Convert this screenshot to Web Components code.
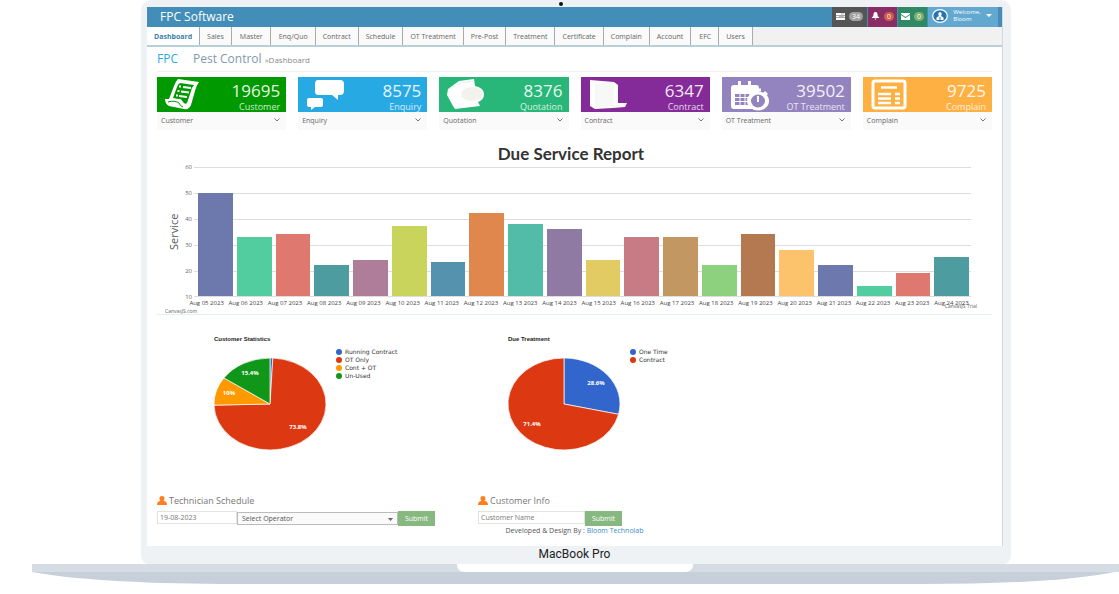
<!DOCTYPE html>
<html lang="en">
<head>
<meta charset="utf-8">
<title>FPC Software - Dashboard</title>
<style>
body { margin: 0; background: #fff; font-family: "Open Sans", "Noto Sans", sans-serif; color: #666; }
</style>
</head>
<body>
<laptop-frame>
  <app-header></app-header>
  <nav-tabs></nav-tabs>
  <page-heading></page-heading>
  <stat-grid>
    <stat-card color="#009900" value="19695" label="Customer" icon="list"></stat-card>
    <stat-card color="#27a9e3" value="8575" label="Enquiry" icon="chat"></stat-card>
    <stat-card color="#28b779" value="8376" label="Quotation" icon="paper"></stat-card>
    <stat-card color="#852b99" value="6347" label="Contract" icon="folder"></stat-card>
    <stat-card color="#9383bf" value="39502" label="OT Treatment" icon="calendar"></stat-card>
    <stat-card color="#ffb043" value="9725" label="Complain" icon="news"></stat-card>
  </stat-grid>
  <bar-chart></bar-chart>
  <chart-row>
    <pie-chart heading="Customer Statistics" slices='[["Running Contract",0.8,"#3366cc"],["OT Only",73.8,"#dc3912",85,72],["Cont + OT",10,"#ff9900",16,38],["Un-Used",15.4,"#109618",37,18]]'></pie-chart>
    <pie-chart heading="Due Treatment" slices='[["One Time",28.6,"#3366cc",89,28],["Contract",71.4,"#dc3912",25,69]]'></pie-chart>
  </chart-row>
  <lookup-forms></lookup-forms>
  <page-footer></page-footer>
</laptop-frame>

<script>
const define = (name, render) => customElements.define(name, class extends HTMLElement {
  constructor() { super(); this.attachShadow({ mode: 'open' }); }
  connectedCallback() { this.shadowRoot.innerHTML = render(this); }
});

define('laptop-frame', () => `
<style>
:host { display: block; }
.lid { position: relative; margin: 0 108px 0 141px; padding: 7px 9px 0 6px; background: #eff2f5; border-radius: 10px 10px 8px 8px; }
.lid::before { content: ""; position: absolute; top: 2px; left: calc(50% - 17px); width: 4px; height: 4px; border-radius: 2px; background: #111; }
.screen { background: #fff; border-right: 1px solid #d5d9dd; margin-right: -1px; }
.brand { height: 18px; line-height: 16px; text-align: center; font-family: Roboto, sans-serif; font-size: 12px; color: #222; }
.base { position: relative; margin-left: 32px; height: 20px; }
.base svg { display: block; width: 100%; height: 20px; }
.notch { position: absolute; top: 0; left: calc(50% - 119px); width: 236px; height: 8px; background: #fff; border-radius: 0 0 7px 7px; }
</style>
<div class="lid"><div class="screen"><slot></slot></div><div class="brand">MacBook Pro</div></div>
<div class="base">
  <svg viewBox="0 0 1087 20" preserveAspectRatio="none" aria-hidden="true">
    <path d="M0 7H1087Q1030 20 890 20H190Q60 19 0 8Z" fill="#c6cfda"/>
    <path d="M0 0H1087V8H0Z" fill="#d5dce4"/>
  </svg>
  <div class="notch"></div>
</div>`);

define('app-header', () => `
<style>
:host { display: flex; height: 20px; background: #438eb9; color: #fff; padding-right: 4px; }
h1 { flex: 1; margin: 0 0 0 13px; font-size: 12px; font-weight: 400; line-height: 19px; }
button { display: flex; align-items: center; justify-content: center; gap: 4px; border: 0; margin: 0 0 0 1px; padding: 0 0 2px; width: 29px; color: #fff; font-family: inherit; font-size: 6px; line-height: 7px; }
.tasks { width: 35px; background: #555; }
.bell { background: #892e65; }
.mail { background: #2e8965; }
.user { width: 70px; background: #62a8d1; text-align: left; gap: 5px; padding-right: 2px; }
.badge { border-radius: 5px; padding: 1px 3px; background: #a0a0a0; font-size: 7px; }
.bell .badge { background: #d15b47; }
.mail .badge { background: #82af6f; }
</style>
<h1>FPC Software</h1>
<button class="tasks"><svg width="9" height="7"><path d="M0 0h9v2H0zM0 2.600h9v1.800H0zM0 5h9v2H0z" fill="#fff"/><path d="M5 1h3M3 3.500h5" stroke="#999" stroke-width=".7"/></svg><span class="badge">34</span></button>
<button class="bell"><svg width="9" height="8"><path d="M4.500 0C2.500 0 2.500 2 2.300 4L.5 6h8l-1.800-2C6.500 2 6.500 0 4.500 0zM3.500 6.500h2L4.500 8z" fill="#fff"/></svg><span class="badge">0</span></button>
<button class="mail"><svg width="9" height="7"><path d="M0 0h9v1L4.500 4 0 1zM0 2l4.500 3L9 2v5H0z" fill="#fff"/></svg><span class="badge">0</span></button>
<button class="user"><svg width="16" height="14" viewBox="0 0 16 14"><ellipse cx="8" cy="7" rx="7.300" ry="6.300" fill="#2573b0" stroke="#fff" stroke-width="1.300"/><path d="M8 3c2 0 2 3 1 4l2.500 1.500V11h-7V8.500L7 7C6 6 6 3 8 3z" fill="#fff"/><path d="M8 8v3" stroke="#2573b0"/></svg><span>Welcome,<br>Bloom</span><svg width="6" height="4"><path d="M0 0h6L3 3z" fill="#fff"/></svg></button>`);

define('nav-tabs', () => `
<style>
:host { display: block; background: #f1f1f1; border-bottom: 2px solid #b5cfdb; }
nav { display: flex; height: 18px; }
a { padding: 0 7px; border-right: 1px solid #aaa; background: #fafafa; color: #666; text-decoration: none; font-size: 7px; line-height: 19px; white-space: nowrap; }
a.on { background: #fff; color: #3a80ac; font-weight: 700; }
a:nth-child(3), a:nth-child(4), a:nth-child(13) { padding-left: 8px; }
</style>
<nav>${['Dashboard','Sales','Master','Enq/Quo','Contract','Schedule','OT Treatment','Pre-Post','Treatment','Certificate','Complain','Account','EFC','Users']
  .map((t, i) => `<a href="#"${i ? '' : ' class="on"'}>${t}</a>`).join('')}</nav>`);

define('page-heading', () => `
<style>
:host { display: flex; align-items: baseline; margin: 0 10px; height: 24px; border-bottom: 1px solid #f1f1f1; line-height: 23px; font-size: 12px; color: #8199b0; }
b { font-weight: 400; color: #27a9e3; margin-right: 15px; }
h2 { margin: 0 3px 0 0; font-size: 12px; font-weight: 400; }
small { font-size: 8px; color: #888; }
</style>
<b>FPC</b><h2>Pest Control</h2><small>»Dashboard</small>`);

define('stat-grid', () => `
<style>:host { display: grid; grid-template-columns: repeat(6, 1fr); gap: 12px; margin: 5px 10px 0; }</style><slot></slot>`);

const ICONS = {
  list: '<path d="M13 2L34 5Q31 9 30 14L26 28Q24 33 19 32L4 29Q0 27 0 22H4L9 9Q11 4 13 2Z" fill="#fff"/><path d="M15 6L29 8Q27 10 26 14L22 26Q20 28 18 25Q16 21 13 22L8 21L12 10Q13 7 15 6Z" fill="BG"/><path d="M18 10L26 11M16 14.500L24 15.500M14 19L22 20" stroke="#fff" stroke-width="2"/><path d="M14 9.500h2M12.500 14h2M11 18.500h2" stroke="#fff" stroke-width="2"/><path d="M3 25Q10 23 14 26Q15 29 18 30" stroke="BG" fill="none"/>',
  chat: '<path d="M12 3H34Q38 3 38 7V14Q38 18 34 18H32V23L26 18H12Q9 18 9 14V7Q9 3 12 3ZM3 21H15Q17 21 17 23V28Q17 30 15 30H9L5 33V30H3Q1 30 1 28V23Q1 21 3 21Z" fill="#fff"/>',
  paper: '<path d="M1 12L12 4L27 2L28 9Q37 11 37 17Q37 23 31 25L33 29L8 32L6 29L0 18Z" fill="#fff"/><ellipse cx="25" cy="17" rx="11" ry="7" fill="#f3f3ee"/><path d="M2 12L14 6L27 4" stroke="#dff5eb" fill="none"/>',
  folder: '<path d="M1 3L25 5L29 8V26H38L36 30L24 31L6 32L1 29Z" fill="#fff"/><path d="M7 7L25 5V29L7 31Z" fill="#f8f8f6"/><path d="M1 3L7 7V31M22 30L37 27" stroke="#eee" stroke-width=".7" fill="none"/>',
  calendar: '<path d="M4 8H8V4H11V8H18V4H21V8H26Q29 8 29 11V29Q29 32 26 32H4Q1 32 1 29V11Q1 8 4 8Z" fill="#fff"/><path d="M5 17H25V28H5Z" fill="BG"/><path d="M5 20.500H25M5 24.500H25M10 17V28M15 17V28M20 17V28" stroke="#fff"/><path d="M24 13H31M27.500 13V17M34 15L37 18" stroke="#fff" stroke-width="3"/><ellipse cx="28" cy="24" rx="11" ry="9.500" fill="#fff"/><ellipse cx="28" cy="24" rx="7" ry="6.500" fill="BG"/><path d="M28 19V25" stroke="#fff" stroke-width="2"/>',
  news: '<rect x="2" y="4" width="32" height="27" rx="2" fill="none" stroke="#fff" stroke-width="3"/><path d="M10 10.500H26" stroke="#fff" stroke-width="2.500"/><path d="M7 17H20M7 21.500H20M7 26H20M24 17H29M24 21.500H29M24 26H29" stroke="#fff" stroke-width="2.500"/>'
};

define('stat-card', el => `
<style>
:host { display: block; min-width: 0; background: #fafafa; }
.top { display: flex; justify-content: space-between; height: 35px; padding: 0 6px 0 8px; background: ${el.getAttribute('color')}; color: #fff; text-align: right; }
.top svg { width: 40px; height: 35px; }
.num { font-size: 17px; line-height: 18px; padding-top: 5px; opacity: .9; }
.label { font-size: 9px; line-height: 13px; opacity: .8; white-space: nowrap; }
a { display: flex; justify-content: space-between; align-items: center; height: 18px; box-sizing: border-box; padding: 0 6px 2px 4px; font-size: 7px; color: #666; text-decoration: none; }
</style>
<div class="top"><svg viewBox="0 0 40 35" aria-hidden="true">${ICONS[el.getAttribute('icon')].replaceAll('BG', el.getAttribute('color'))}</svg>
<div><div class="num">${el.getAttribute('value')}</div><div class="label">${el.getAttribute('label')}</div></div></div>
<a href="#">${el.getAttribute('label')}<svg width="6" height="4"><path d="M.5.5L3 3L5.500.5" fill="none" stroke="#777"/></svg></a>`);

const BARS = [[50,'#6d78ad'],[33,'#51cda0'],[34,'#df7970'],[22,'#4c9ca0'],[24,'#ae7d99'],[37,'#c9d45c'],[23,'#5592ad'],[42,'#df874d'],[38,'#52bca8'],[36,'#8e7aa3'],[24,'#e3cb64'],[33,'#c77b85'],[33,'#c39762'],[22,'#8dd17e'],[34,'#b57952'],[28,'#fcc26c'],[22,'#6d78ad'],[14,'#51cda0'],[19,'#df7970'],[25,'#4c9ca0']];

define('bar-chart', () => `
<style>
:host { display: block; position: relative; margin: 0 10px; padding-top: 14px; border-bottom: 1px solid #e6eef2; }
h3 { margin: 0; font: 700 17px/19px Lato, sans-serif; color: #333; text-align: center; padding-right: 7px; height: 23px; }
.area { display: grid; grid-template-columns: 24px 9px 1fr; column-gap: 2px; padding-right: 21px; height: 130px; }
.axis { writing-mode: vertical-rl; transform: rotate(180deg); text-align: center; font-size: 11px; line-height: 14px; color: #555; justify-self: end; }
.ticks { display: flex; flex-direction: column; justify-content: space-between; margin: -4px 0; font-size: 6px; line-height: 8px; text-align: right; }
.plot { display: flex; align-items: flex-end; gap: 4px; padding: 0 2px 0 4px; background: repeating-linear-gradient(#ddd 0 1px, transparent 1px 26px); border-bottom: 1px solid #ddd; }
.plot i { flex: 1; }
.dates { display: flex; padding: 2px 21px 0 30px; font-size: 6px; line-height: 9px; color: #444; }
.dates span { flex: 1 1 0; width: 0; display: flex; justify-content: center; white-space: nowrap; }
.credit { font-size: 5px; line-height: 6px; padding-left: 8px; }
.trial { position: absolute; right: 15px; bottom: 5px; font-size: 5px; line-height: 6px; }
</style>
<h3>Due Service Report</h3>
<div class="area"><div class="axis">Service</div>
<div class="ticks">${[60,50,40,30,20,10].map(n => `<span>${n}</span>`).join('')}</div>
<div class="plot">${BARS.map(([v, c]) => `<i style="height:${(v - 10) * 2}%;background:${c}"></i>`).join('')}</div></div>
<div class="dates">${BARS.map((b, i) => `<span>Aug ${String(i + 5).padStart(2, '0')} 2023</span>`).join('')}</div>
<div class="credit">CanvasJS.com</div><div class="trial">CanvasJS Trial</div>`);

define('chart-row', () => `
<style>:host { display: grid; grid-template-columns: 294px 1fr; padding: 17px 0 0 66px; }</style><slot></slot>`);

define('pie-chart', el => {
  const slices = JSON.parse(el.getAttribute('slices'));
  let turn = 0;
  const point = t => `${57 + 56 * Math.sin(t * Math.PI / 50)} ${47 - 46 * Math.cos(t * Math.PI / 50)}`;
  const paths = slices.map(([, size, color]) => {
    const from = point(turn);
    turn += size;
    return `<path d="M57 47L${from}A56 46 0 ${size > 50 ? 1 : 0} 1 ${point(turn)}Z" fill="${color}" stroke="#fff" stroke-width=".7"/>`;
  }).join('');
  const texts = slices.filter(s => s[3]).map(s => `<text x="${s[3]}" y="${s[4]}">${s[1]}%</text>`).join('');
  return `
<style>
:host { display: block; }
h4 { margin: 0; font: 700 6px/14px "Liberation Sans", sans-serif; color: #222; height: 25px; padding-left: 1px; }
.body { display: flex; gap: 9px; }
svg { display: block; flex: none; }
text { font: 700 6px "Open Sans", sans-serif; fill: #fff; text-anchor: middle; }
ul { list-style: none; margin: -9px 0 0; padding: 0; font: 6px/8px "DejaVu Sans", sans-serif; color: #333; }
li { display: flex; align-items: center; gap: 3px; height: 8px; white-space: nowrap; }
li i { width: 6px; height: 6px; border-radius: 3px; }
</style>
<h4>${el.getAttribute('heading')}</h4>
<div class="body"><svg width="114" height="94">${paths}${texts}</svg>
<ul>${slices.map(s => `<li><i style="background:${s[2]}"></i>${s[0]}</li>`).join('')}</ul></div>`;
});

const PERSON = '<svg width="10" height="9" viewBox="0 0 10 9" aria-hidden="true"><path d="M5 0C8 0 8 3 6.500 5Q10 5 10 9H0Q0 5 3.500 5C2 3 2 0 5 0Z" fill="#ff7f1f"/></svg>';
define('lookup-forms', () => `
<style>
:host { display: grid; grid-template-columns: 321px 1fr; padding: 43px 0 0 10px; }
label { display: flex; align-items: flex-start; gap: 2px; font-size: 9px; line-height: 14px; height: 17px; color: #777; }
label svg { margin-top: 2px; }
form { display: flex; height: 15px; align-items: flex-start; }
input, select, button { box-sizing: border-box; margin: 0; border-radius: 0; font: 7px/9px "Open Sans", sans-serif; }
input { width: 80px; height: 13px; border: 1px solid #e2e2e2; padding: 0 2px 1px; color: #777; background: #fff; }
input::placeholder { color: #777; }
.wide { width: 107px; }
.pick { display: flex; position: relative; }
.pick svg { position: absolute; right: 5px; top: 7px; }
select { appearance: none; width: 161px; height: 13px; margin-top: 1px; border: 1px solid #bbb; background: #fafafa; color: #555; padding: 0 4px; }
button { width: 37px; height: 15px; border: 0; background: #87b87f; color: #fff; }
</style>
<section><label for="day">${PERSON}Technician Schedule</label>
<form><input id="day" value="19-08-2023"><span class="pick"><select aria-label="Operator"><option>Select Operator</option></select><svg width="5" height="3"><path d="M0 0h5L2.500 3z" fill="#666"/></svg></span><button type="button">Submit</button></form></section>
<section><label for="who">${PERSON}Customer Info</label>
<form><input id="who" class="wide" placeholder="Customer Name"><button type="button">Submit</button></form></section>`);

define('page-footer', () => `
<style>
:host { display: block; height: 20px; text-align: center; font-size: 7px; line-height: 9px; color: #555; }
a { color: #428bca; text-decoration: none; }
</style>
Developed &amp; Design By : <a href="#">Bloom Technolab</a>`);
</script>
</body>
</html>
